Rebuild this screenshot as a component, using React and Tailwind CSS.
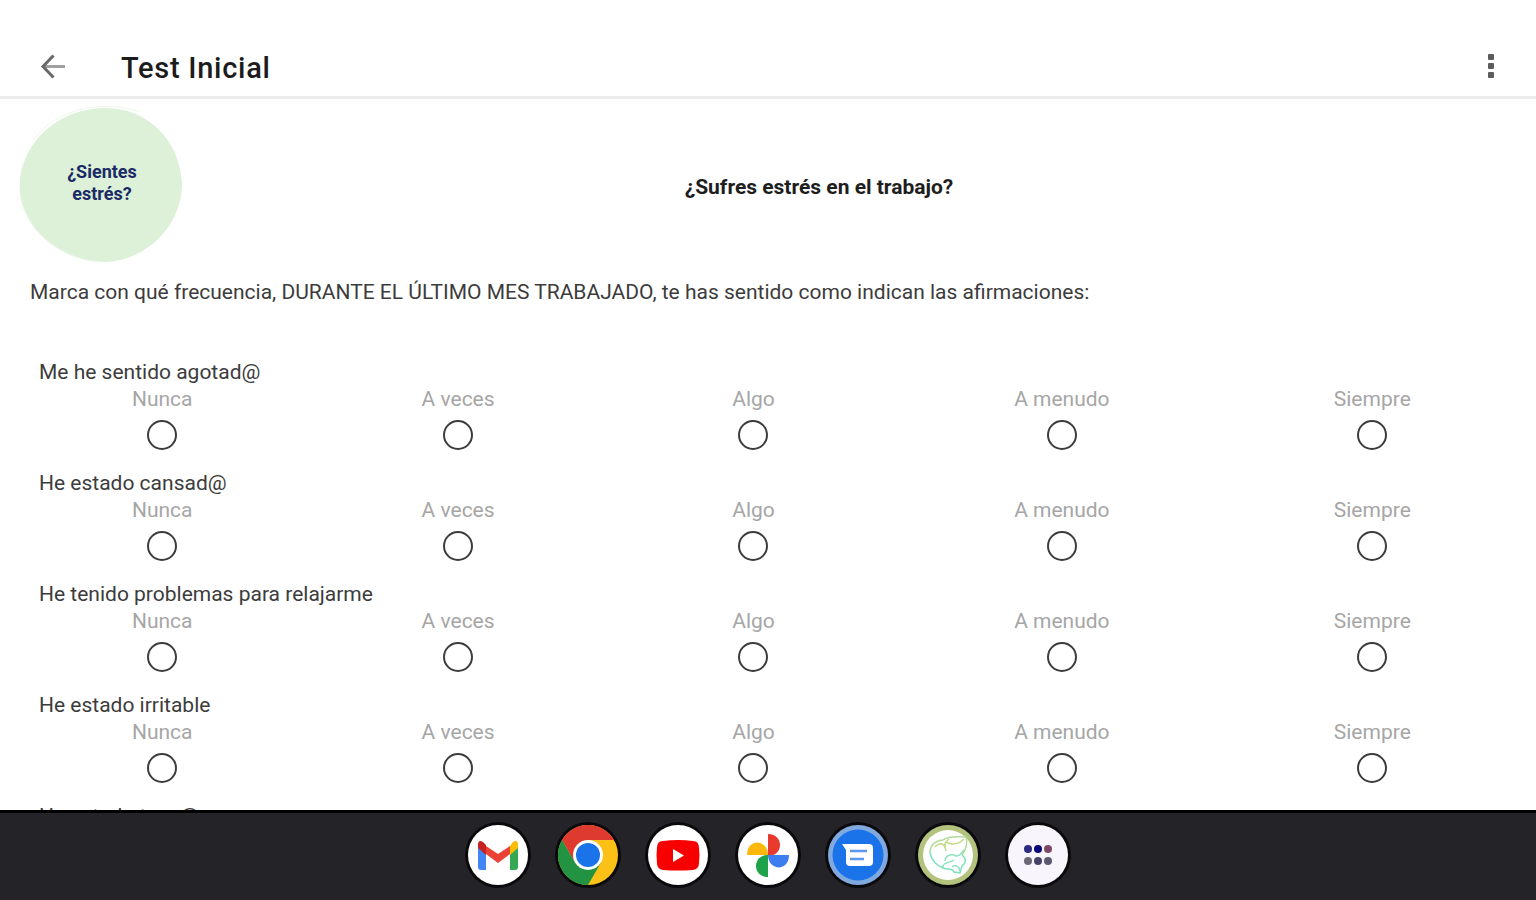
import React, { useState } from 'react';

const OPTIONS = ['Nunca', 'A veces', 'Algo', 'A menudo', 'Siempre'];

const QUESTIONS = [
  'Me he sentido agotad@',
  'He estado cansad@',
  'He tenido problemas para relajarme',
  'He estado irritable',
  'He estado tens@',
];

const Header = () => (
  <header className="flex h-[99px] shrink-0 items-end justify-between border-b-3 border-[#ebebeb] pr-[33px] pb-[11px] pl-9">
    <div className="flex items-end gap-[49px]">
      <button type="button" aria-label="Atrás" className="flex size-9 items-center justify-center">
        <svg viewBox="0 0 36 36" className="size-9" fill="none" strokeWidth="3">
          <path d="M9 17.5H29" stroke="#a0a0a0" />
          <path d="M17.5 6.5L7 17.500L17.5 28.5" stroke="#686868" />
        </svg>
      </button>
      <h1 className="text-[29px] leading-[34px] font-medium tracking-wide text-[#1c1c1c]">Test Inicial</h1>
    </div>
    <button type="button" aria-label="Más opciones" className="flex h-9 w-6 items-center justify-center">
      <svg viewBox="0 0 24 36" className="h-9 w-6" fill="#5c5c5c">
        <rect x="9" y="5" width="6" height="6" rx="1" />
        <rect x="9" y="14" width="6" height="6" rx="1" />
        <rect x="9" y="23" width="6" height="6" rx="1" />
      </svg>
    </button>
  </header>
);

const Badge = () => (
  <div className="relative flex h-40 w-[166px] items-center justify-center">
    <svg viewBox="0 0 166 160" className="absolute inset-0 h-full w-full">
      <path
        d="M88 5C52 5 22 24 8 54C-1 74 0 95 8 111C20 138 52 159 88 159C130 157 164 122 164 80C162 38 130 5 88 5Z"
        fill="#dcf1d7"
      />
      <path d="M16 36C38 6 84 -4 122 9M2 92C8 124 34 150 72 158" fill="none" stroke="#eef8eb" strokeWidth="1" />
    </svg>
    <p className="relative pl-0.5 text-center text-lg leading-[22px] font-bold text-[#1b2a66]">
      ¿Sientes
      <br />
      estrés?
    </p>
  </div>
);

const Question = ({ name, text, value, onChange }) => (
  <fieldset className="pb-5">
    <legend className="pl-6 text-[21px] leading-[27px] text-[#3c3c3c]">{text}</legend>
    <div className="grid grid-cols-[294fr_297fr_293fr_323fr_297fr]">
      {OPTIONS.map((option) => (
        <label key={option} className="flex flex-col items-center gap-[7px] text-[21px] leading-[27px] text-[#a6a6a6]">
          {option}
          <input
            type="radio"
            name={name}
            value={option}
            checked={value === option}
            onChange={() => onChange(option)}
            className="size-[30px] appearance-none rounded-full border-2 border-[#3c3c3c] checked:border-8"
          />
        </label>
      ))}
    </div>
  </fieldset>
);

const GmailIcon = () => (
  <svg viewBox="0 0 60 60" className="size-full">
    <circle cx="30" cy="30" r="30" fill="#fff" />
    <path d="M10 20V42Q10 45 13 45H18V25Z" fill="#4285f4" />
    <path d="M50 20V42Q50 45 47 45H42V25Z" fill="#34a853" />
    <path d="M42 21L45 17Q50 14 50 20V23L42 30Z" fill="#fbbc04" />
    <path d="M18 21L30 29L42 21V29L30 38L18 29Z" fill="#ea4335" />
    <path d="M10 23V20Q10 14 15 17L18 20V30Z" fill="#c5221f" />
  </svg>
);

const ChromeIcon = () => (
  <svg viewBox="0 0 60 60" className="size-full">
    <circle cx="30" cy="30" r="30" fill="#fbc116" />
    <path d="M4 15A30 30 0 0 1 56 15H30L17 37.500Z" fill="#df3a2f" />
    <path d="M4 15A30 30 0 0 0 30 60L43 37.500L30 45L17 37.500Z" fill="#229342" />
    <circle cx="30" cy="30" r="15" fill="#fff" />
    <circle cx="30" cy="30" r="12" fill="#1a73e8" />
  </svg>
);

const YoutubeIcon = () => (
  <svg viewBox="0 0 60 60" className="size-full">
    <circle cx="30" cy="30" r="30" fill="#fff" />
    <path d="M15 16Q30 14 45 16Q51 16 51 23Q52 30 51 38Q51 44 45 45Q30 46 15 45Q9 44 9 38Q8 30 9 23Q9 16 15 16Z" fill="#f80000" />
    <path d="M25 24V37L36 30.500Z" fill="#fff" />
  </svg>
);

const PhotosIcon = () => (
  <svg viewBox="0 0 60 60" className="size-full">
    <circle cx="30" cy="30" r="30" fill="#fff" />
    <path d="M30 9C46 9 46 31 30 31Z" fill="#e93b2d" />
    <path d="M51 30C51 47 30 46 30 30Z" fill="#3c7df0" />
    <path d="M30 52C14 52 14 30 30 30Z" fill="#1fa34a" />
    <path d="M9 30C9 13 30 14 30 30Z" fill="#fdb80b" />
  </svg>
);

const MessagesIcon = () => (
  <svg viewBox="0 0 60 60" className="size-full">
    <circle cx="30" cy="30" r="30" fill="#7fa9df" />
    <circle cx="30" cy="30" r="25.500" fill="#1a73e8" />
    <path d="M14 19H41Q45 19 45 23V37Q45 41 41 41H22Q18 41 18 37V25Z" fill="#fff" />
    <path d="M22 26H39M22 34H36" stroke="#5c97ee" strokeWidth="2.500" />
  </svg>
);

const BrainIcon = () => (
  <svg viewBox="0 0 60 60" className="size-full">
    <circle cx="30" cy="30" r="30" fill="#b3c27c" />
    <circle cx="30" cy="30" r="25" fill="#fff" />
    <g fill="none" strokeWidth="1.500">
      <path d="M12 28C12 20 17 16 25 15C32 10 42 12 48 12C50 19 47 26 44 30" stroke="#b0dc98" />
      <path d="M17 22C22 17 26 17 28 26M28 17C33 20 40 20 46 14M28 22C25 20 28 16 31 14" stroke="#c2dc88" />
      <path d="M12 28C14 37 19 40 25 43C31 45 34 43 36 47L42 48L44 41C48 38 49 34 44 30" stroke="#7ce2bc" />
      <path d="M27 36C27 31 33 28 38 31C42 32 43 28 46 25M25 43C24 37 32 38 36 35M34 42C38 39 43 43 41 46" stroke="#8fe3c0" />
    </g>
  </svg>
);

const AppsIcon = () => (
  <svg viewBox="0 0 60 60" className="size-full">
    <circle cx="30" cy="30" r="30" fill="#f8f5fc" />
    <circle cx="20" cy="24" r="4" fill="#2b2b80" />
    <circle cx="30" cy="24" r="4" fill="#0c0878" />
    <circle cx="40" cy="24" r="4" fill="#7c4a68" />
    <circle cx="20" cy="36" r="4" fill="#6c6878" />
    <circle cx="30" cy="36" r="4" fill="#46436a" />
    <circle cx="40" cy="36" r="4" fill="#5c5870" />
  </svg>
);

const DOCK = [
  { label: 'Gmail', Icon: GmailIcon },
  { label: 'Chrome', Icon: ChromeIcon },
  { label: 'YouTube', Icon: YoutubeIcon },
  { label: 'Fotos', Icon: PhotosIcon },
  { label: 'Mensajes', Icon: MessagesIcon },
  { label: 'Test de estrés', Icon: BrainIcon },
  { label: 'Aplicaciones', Icon: AppsIcon },
];

const Dock = () => (
  <nav className="flex h-[90px] shrink-0 items-start justify-center gap-[30px] border-t-3 border-black bg-[#242328] pt-3">
    {DOCK.map(({ label, Icon }) => (
      <button key={label} type="button" aria-label={label} className="size-[60px] rounded-full ring-3 ring-[#0a0a0d]">
        <Icon />
      </button>
    ))}
  </nav>
);

const App = () => {
  const [answers, setAnswers] = useState({});

  return (
    <div className="flex h-screen flex-col bg-white font-['Roboto',sans-serif]">
      <Header />
      <main className="min-h-0 flex-1 overflow-hidden">
        <div className="flex items-center pt-1 pl-[18px]">
          <Badge />
          <h2 className="flex-1 pt-2 pr-[82px] text-center text-[21px] leading-7 font-bold text-[#1e1e1e]">
            ¿Sufres estrés en el trabajo?
          </h2>
        </div>
        <p className="px-[30px] pt-[15px] text-[21px] leading-7 text-[#3c3c3c]">
          Marca con qué frecuencia, DURANTE EL ÚLTIMO MES TRABAJADO, te has sentido como indican las afirmaciones:
        </p>
        <div className="px-[15px] pt-[53px]">
          {QUESTIONS.map((question, index) => (
            <Question
              key={question}
              name={`q${index}`}
              text={question}
              value={answers[index]}
              onChange={(option) => setAnswers({ ...answers, [index]: option })}
            />
          ))}
        </div>
      </main>
      <Dock />
    </div>
  );
};

export default App;
